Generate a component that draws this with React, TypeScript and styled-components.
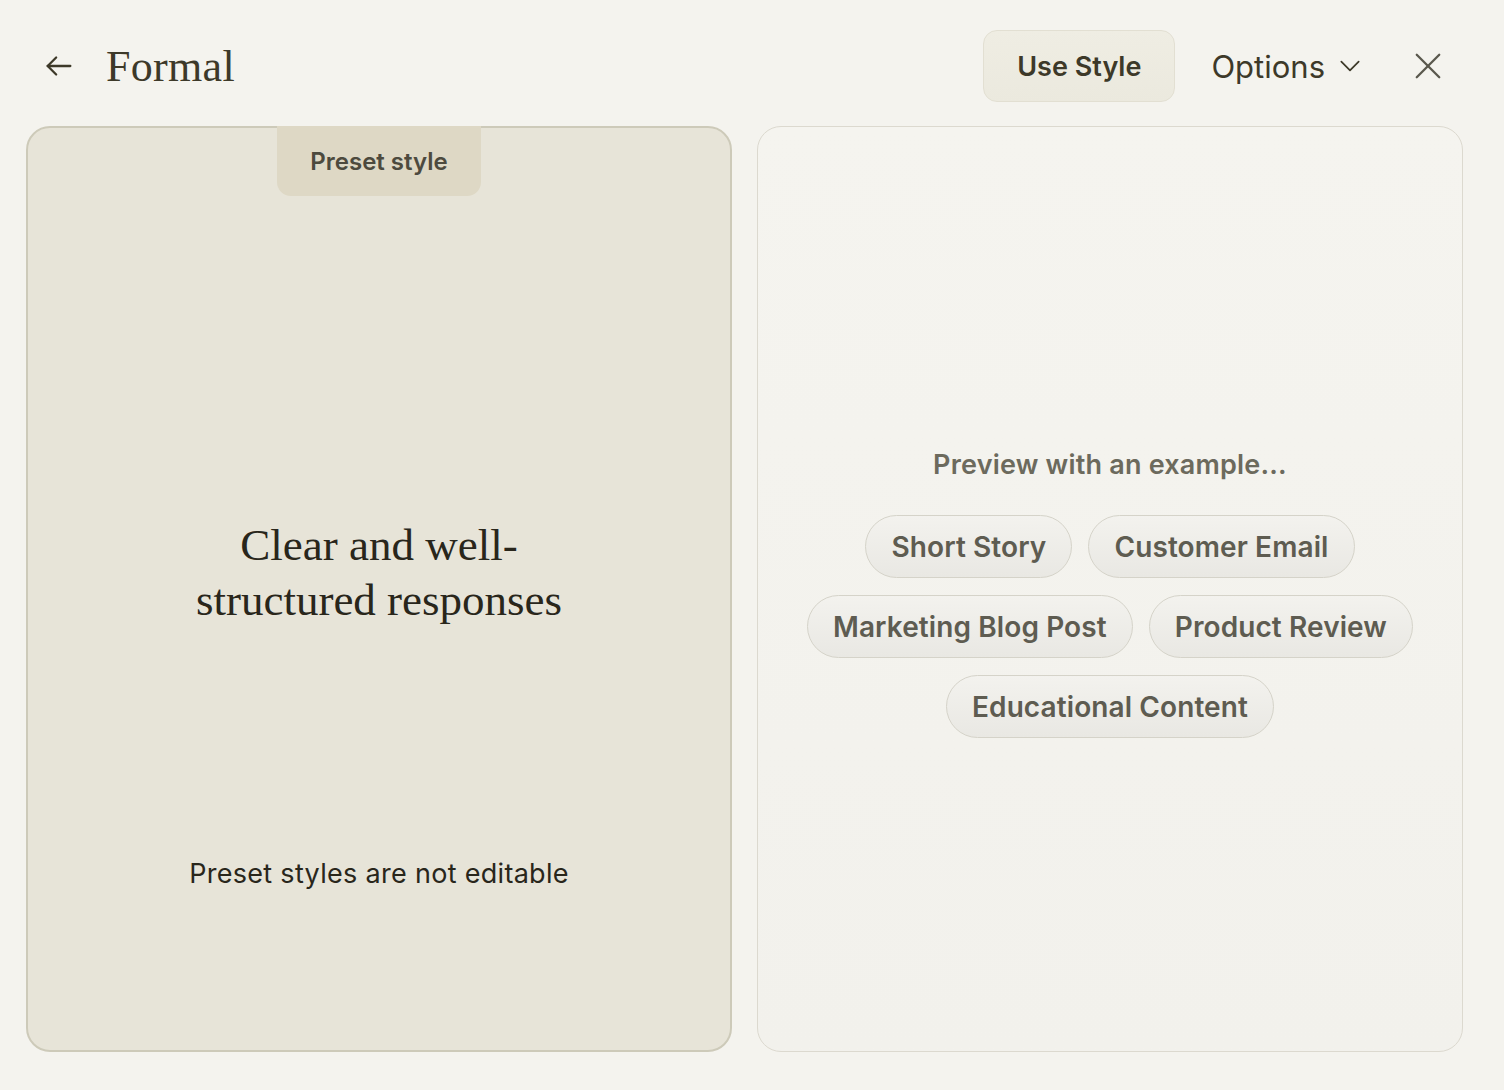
import React from 'react';
import styled, { createGlobalStyle } from 'styled-components';

const GlobalStyle = createGlobalStyle`
  html, body {
    margin: 0;
    padding: 0;
    background: #f4f3ee;
  }
  body {
    font-family: Inter, "Noto Sans", sans-serif;
    color: #3d3929;
  }
`;

const Page = styled.div`
  width: 1504px;
  height: 1090px;
  box-sizing: border-box;
  padding: 0 41px 38px 26px;
  display: flex;
  flex-direction: column;
`;

const Header = styled.header`
  height: 126px;
  display: flex;
  align-items: center;
  padding-top: 6px;
  box-sizing: border-box;
`;

const IconButton = styled.button`
  background: none;
  border: 0;
  padding: 0;
  display: flex;
  align-items: center;
  justify-content: center;
  color: #3d3929;
  cursor: pointer;
`;

const Title = styled.h1`
  margin: 0 0 0 30px;
  font-family: "Liberation Serif", serif;
  font-weight: 400;
  font-size: 44px;
  letter-spacing: 0.3px;
  color: #3d3929;
`;

const Actions = styled.div`
  margin-left: auto;
  display: flex;
  align-items: center;
`;

const PrimaryButton = styled.button`
  height: 72px;
  padding: 0 33px;
  border-radius: 14px;
  border: 1px solid #e2dfd2;
  background: linear-gradient(180deg, #efede3 0%, #ebe9de 100%);
  font-family: Inter, sans-serif;
  font-weight: 600;
  font-size: 27px;
  color: #3d3929;
  cursor: pointer;
`;

const OptionsButton = styled.button`
  margin-left: 36px;
  background: none;
  border: 0;
  display: flex;
  align-items: center;
  gap: 12px;
  font-family: Inter, sans-serif;
  font-weight: 400;
  font-size: 31px;
  color: #3d3929;
  padding: 0;
  cursor: pointer;
`;

const CloseButton = styled(IconButton)`
  margin-left: 50px;
  margin-right: 20px;
`;

const Panels = styled.main`
  flex: 1;
  display: grid;
  grid-template-columns: 1fr 1fr;
  gap: 25px;
`;

const StylePanel = styled.section`
  border: 2px solid #cdcab9;
  border-radius: 24px;
  background: #e7e4d8;
  display: flex;
  flex-direction: column;
  align-items: center;
`;

const Tab = styled.div`
  margin-top: -2px;
  width: 204px;
  height: 70px;
  box-sizing: border-box;
  background: #ded8c5;
  border-radius: 0 0 14px 14px;
  display: flex;
  align-items: center;
  justify-content: center;
  font-weight: 600;
  font-size: 24px;
  color: #4d4a3e;
`;

const Description = styled.div`
  flex: 1;
  display: flex;
  align-items: center;
  justify-content: center;
  padding-top: 92px;
`;

const Lead = styled.p`
  margin: 0;
  width: 420px;
  text-align: center;
  font-family: "Liberation Serif", serif;
  font-size: 45px;
  line-height: 55px;
  color: #29261b;
`;

const Note = styled.p`
  margin: 0 0 160px;
  font-size: 27px;
  color: #29261b;
  letter-spacing: 0.3px;
`;

const PreviewPanel = styled.section`
  border: 1px solid #dcd9cf;
  border-radius: 24px;
  background: linear-gradient(180deg, #f5f4ef 0%, #f2f1ec 100%);
  display: flex;
  flex-direction: column;
  align-items: center;
  justify-content: center;
  padding-top: 8px;
`;

const PreviewLabel = styled.div`
  font-weight: 600;
  font-size: 27px;
  letter-spacing: 0.2px;
  color: #6c6a5d;
  margin-bottom: 34px;
`;

const Chips = styled.div`
  width: 640px;
  display: flex;
  flex-wrap: wrap;
  justify-content: center;
  gap: 17px 16px;
`;

const Chip = styled.button`
  height: 63px;
  padding: 0 25px;
  border-radius: 32px;
  border: 1px solid #d5d3c9;
  background: linear-gradient(180deg, #f3f2ee 0%, #e9e8e3 100%);
  font-family: Inter, sans-serif;
  font-weight: 600;
  font-size: 28px;
  letter-spacing: 0.1px;
  color: #5e5c51;
  cursor: pointer;
`;

const examples = [
  'Short Story',
  'Customer Email',
  'Marketing Blog Post',
  'Product Review',
  'Educational Content',
];

const ArrowLeft = () => (
  <svg width="34" height="34" viewBox="0 0 24 24" fill="none" stroke="currentColor" strokeWidth="1.6" strokeLinecap="round" strokeLinejoin="round">
    <path d="M20 12H4" />
    <path d="M10 6l-6 6 6 6" />
  </svg>
);

const ChevronDown = () => (
  <svg width="26" height="26" viewBox="0 0 24 24" fill="none" stroke="currentColor" strokeWidth="1.6" strokeLinecap="round" strokeLinejoin="round">
    <path d="M4 8l8 8 8-8" />
  </svg>
);

const CloseIcon = () => (
  <svg width="30" height="30" viewBox="0 0 24 24" fill="none" stroke="#5a584d" strokeWidth="1.8" strokeLinecap="round">
    <path d="M3 3l18 18" />
    <path d="M21 3L3 21" />
  </svg>
);

export default function App() {
  return (
    <>
      <GlobalStyle />
      <Page>
        <Header>
          <IconButton style={{ marginLeft: 16 }}>
            <ArrowLeft />
          </IconButton>
          <Title>Formal</Title>
          <Actions>
            <PrimaryButton>Use Style</PrimaryButton>
            <OptionsButton>
              Options
              <ChevronDown />
            </OptionsButton>
            <CloseButton>
              <CloseIcon />
            </CloseButton>
          </Actions>
        </Header>
        <Panels>
          <StylePanel>
            <Tab>Preset style</Tab>
            <Description>
              <Lead>Clear and well-structured responses</Lead>
            </Description>
            <Note>Preset styles are not editable</Note>
          </StylePanel>
          <PreviewPanel>
            <PreviewLabel>Preview with an example...</PreviewLabel>
            <Chips>
              {examples.map((e) => (
                <Chip key={e}>{e}</Chip>
              ))}
            </Chips>
          </PreviewPanel>
        </Panels>
      </Page>
    </>
  );
}
